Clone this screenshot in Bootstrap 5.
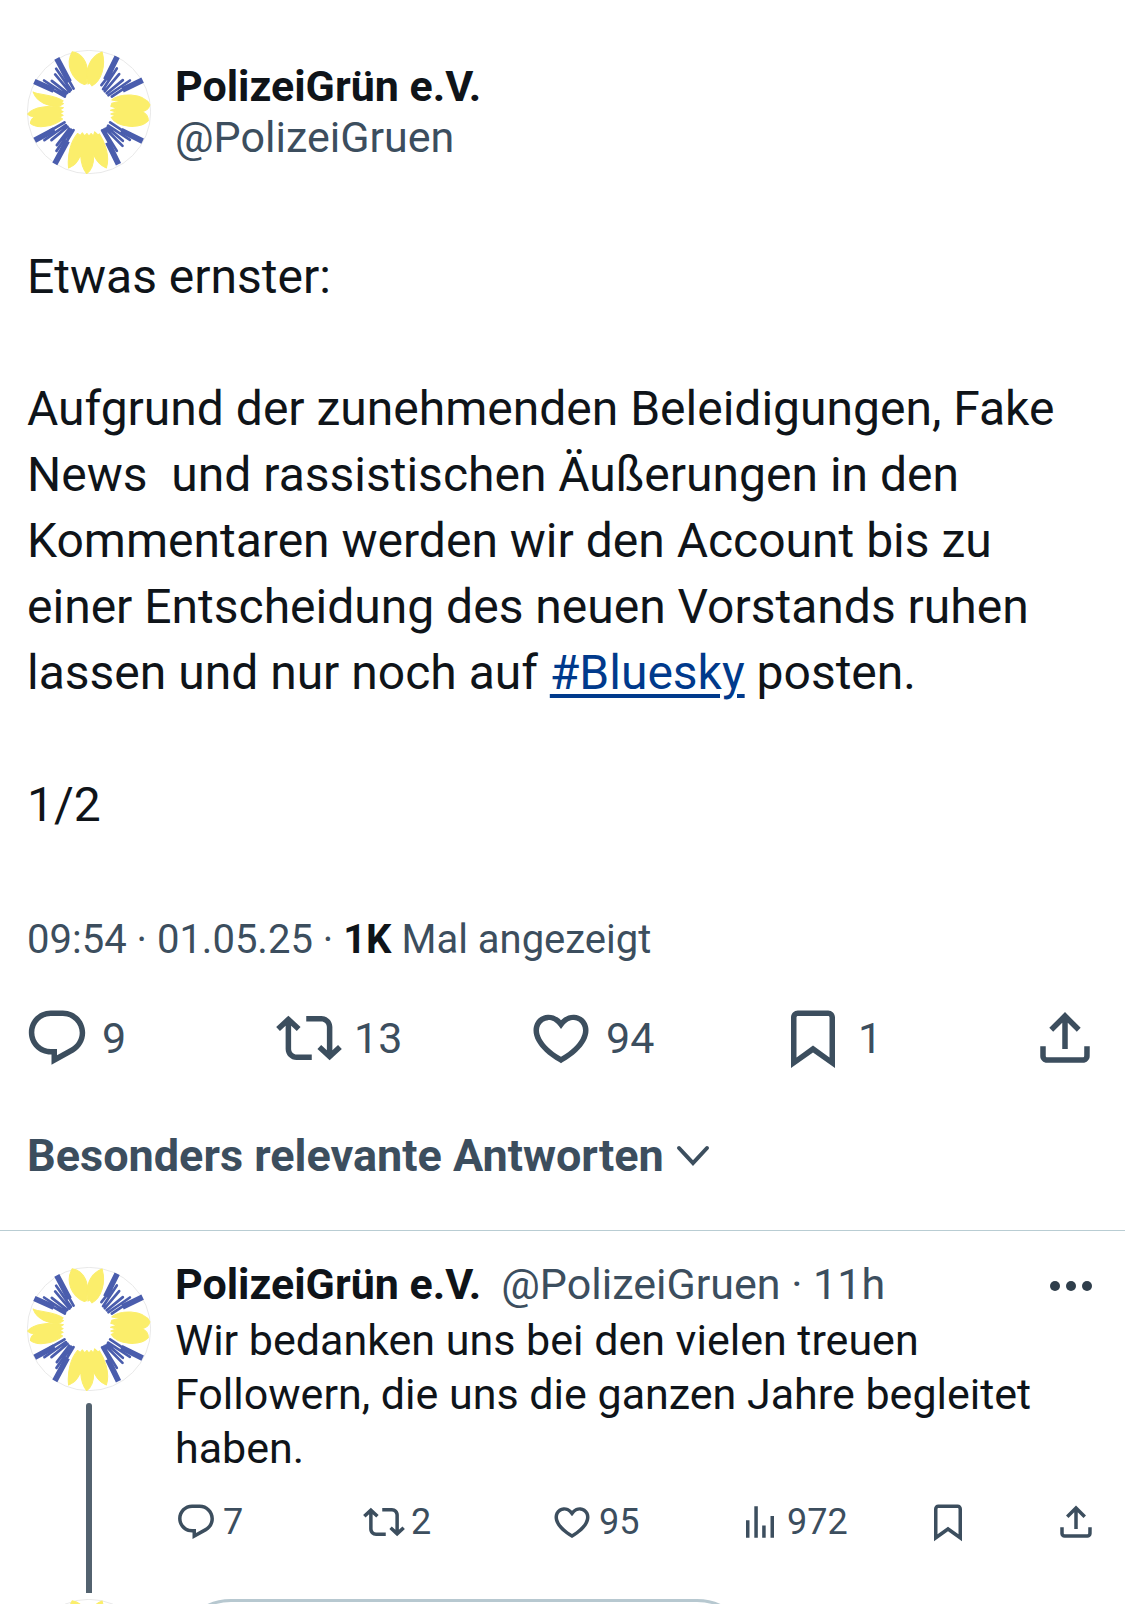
<!DOCTYPE html>
<html lang="de">
<head>
<meta charset="utf-8">
<meta name="viewport" content="width=device-width, initial-scale=1">
<title>PolizeiGrün e.V.</title>
<link rel="stylesheet" href="https://cdn.jsdelivr.net/npm/bootstrap@5.3.0/dist/css/bootstrap.min.css">
<style>
  body { font-family: Roboto, "Noto Sans", sans-serif; color: #0f1419; background: #fff; }
  .slate { color: #3c4e5e; }
  .thread { padding-top: 50px; }
  .head-row { gap: 24px; padding: 0 28px 0 27px; }
  .avatar { width: 124px; height: 124px; display: block; flex: none; }
  .author { font-size: 43px; line-height: 51px; }
  .post-text { font-size: 48px; line-height: 66px; padding: 0 36px 0 27px; margin-top: 70px; }
  .post-text p { margin-bottom: 66px; }
  .post-text p:last-child { margin-bottom: 0; }
  .post-text a { color: #003a8c; text-decoration-thickness: 4px; text-underline-offset: 5px; }
  .post-meta { font-size: 40px; line-height: 48px; padding: 0 27px; margin-top: 78px; }
  .post-meta strong { color: #0f1419; }
  .actions { padding: 0 27px 0 24px; margin-top: 41px; }
  .act { border: 0; background: none; padding: 0; display: flex; align-items: center; color: #3c4e5e; text-align: left; }
  .act svg { fill: currentColor; flex: none; }
  .actions .act { font-size: 43px; line-height: 66px; gap: 12px; }
  .actions .act svg { width: 66px; height: 66px; }
  .grow { flex: 1 1 0; }
  .sorter { border: 0; background: none; font-size: 45px; line-height: 54px; gap: 12px; padding: 0 27px; margin: 58px 0 47px; }
  .sorter svg { width: 34px; height: 24px; }
  .reply { border-top: 1px solid #b9cdd3; gap: 24px; padding: 0 28px 0 27px; }
  .rail { padding-top: 36px; }
  .rail-line { width: 6px; margin-top: 12px; background: #53626f; border-radius: 3px 3px 0 0; }
  .reply-main { padding: 26px 0 50px; font-size: 43px; line-height: 54px; }
  .reply-head { gap: 20px; margin-bottom: 2px; }
  .more { padding-top: 4px; }
  .more svg { width: 42px; height: 12px; margin-right: 5px; fill: #2f3e4b; }
  .reply-actions { margin-top: 26px; }
  .reply-actions .act { font-size: 36px; line-height: 42px; gap: 6px; }
  .reply-actions .act svg { width: 42px; height: 42px; }
  .save { width: 128px; }
  .next { gap: 24px; padding: 6px 27px 0; }
  .quote { width: 578px; height: 124px; border: 3px solid #b7c8d0; border-radius: 56px; }
</style>
<script src="https://cdn.jsdelivr.net/npm/bootstrap@5.3.0/dist/js/bootstrap.bundle.min.js"></script>
</head>
<body>
<svg class="d-none" aria-hidden="true">
  <symbol id="flower" viewBox="37 31 370 370">
    <circle cx="222" cy="216" r="184" fill="#fff" stroke="#dedede" stroke-width="2"/>
    <g fill="#fbee6b" stroke="#fbee6b" stroke-width="3" stroke-linejoin="round">
      <path d="M208 134C168 117 151 72 172 36C200 40 218 68 218 100L214 132Z"/>
      <path d="M219 133C209 88 225 51 261 37C273 77 260 122 231 138L224 129Z"/>
      <path d="M290 190L313 184 290 180C310 160 385 156 404 195C399 210 388 214 380 215C391 219 399 229 399 242C375 267 308 265 288 232L300 227 287 222 303 216 286 211 305 205 287 199Z"/>
      <path d="M55 156C76 166 120 165 145 183L139 187 146 191 133 199C101 200 67 188 55 156Z"/>
      <path d="M39 222C55 199 110 195 146 203L135 210 145 215 136 220 145 226 134 231 143 237C115 261 67 267 47 250C48 240 52 234 61 231C49 230 43 227 39 222Z"/>
      <path d="M188 280L196 286 202 278 209 287 216 280 222 288 228 280 235 287 239 275 249 284 253 281C270 307 285 348 274 383C252 375 242 357 236 344C237 368 229 390 215 400C204 386 198 367 197 344C190 363 178 377 161 383C157 346 166 305 188 280Z"/>
    </g>
    <g stroke="#4a5dad" stroke-linecap="round" fill="none">
      <g stroke-width="17" stroke-linecap="butt">
        <path d="M126 56L163 126M59 125L117 151M306 51L272 120M382 121L322 150M60 300L119 269M120 371L157 302M310 372L278 306M382 303L318 271"/>
      </g>
      <g stroke-width="8">
        <path d="M152 104L176 146M124 87L168 150M121 104L164 155M111 123L157 159M88 122L152 164M100 142L150 170"/>
        <path d="M288 99L259 136M305 86L264 148M312 103L269 154M323 121L275 160M344 122L280 166M335 140L290 170"/>
        <path d="M106 272L149 247M89 300L153 255M110 300L158 260M126 315L163 266M125 332L169 269M150 313L176 270"/>
        <path d="M328 275L285 247M344 299L279 257M323 302L277 262M322 317L271 266M305 332L266 269M286 315L261 271"/>
      </g>
    </g>
  </symbol>
  <symbol id="i-reply" viewBox="0 0 24 24"><path d="M1.751 10c0-4.42 3.584-8 8.005-8h4.366c4.49 0 8.129 3.64 8.129 8.13 0 2.96-1.607 5.68-4.196 7.11l-8.054 4.46v-3.69h-.067c-4.49.1-8.183-3.51-8.183-8.01zm8.005-6c-3.317 0-6.005 2.69-6.005 6 0 3.37 2.77 6.08 6.138 6.01l.351-.01h1.761v2.3l5.087-2.81c1.951-1.08 3.163-3.13 3.163-5.36 0-3.39-2.744-6.13-6.129-6.13H9.756z"/></symbol>
  <symbol id="i-repost" viewBox="0 0 24 24"><path d="M4.5 3.88l4.432 4.14-1.364 1.46L5.5 7.55V16c0 1.1.896 2 2 2H13v2H7.5c-2.209 0-4-1.79-4-4V7.55L1.432 9.48.068 8.02 4.5 3.88zM16.5 6H11V4h5.5c2.209 0 4 1.79 4 4v8.45l2.068-1.93 1.364 1.46-4.432 4.14-4.432-4.14 1.364-1.46 2.068 1.93V8c0-1.1-.896-2-2-2z"/></symbol>
  <symbol id="i-like" viewBox="0 0 24 24"><path d="M16.697 5.5c-1.222-.06-2.679.51-3.89 2.16l-.805 1.09-.806-1.09C9.984 6.01 8.526 5.44 7.304 5.5c-1.243.07-2.349.78-2.91 1.91-.552 1.12-.633 2.78.479 4.82 1.074 1.97 3.257 4.27 7.129 6.61 3.87-2.34 6.052-4.64 7.126-6.61 1.111-2.04 1.03-3.7.477-4.82-.561-1.13-1.666-1.84-2.908-1.91zm4.187 7.69c-1.351 2.48-4.001 5.12-8.379 7.67l-.503.3-.504-.3c-4.379-2.55-7.029-5.19-8.382-7.67-1.36-2.5-1.41-4.86-.514-6.67.887-1.79 2.647-2.91 4.601-3.01 1.651-.09 3.368.56 4.798 2.01 1.429-1.45 3.146-2.1 4.796-2.01 1.954.1 3.714 1.22 4.601 3.01.896 1.81.846 4.17-.514 6.67z"/></symbol>
  <symbol id="i-views" viewBox="0 0 24 24"><path d="M8.75 21V3h2v18h-2zM18 21V8.5h2V21h-2zM4 21l.004-10h2L6 21H4zm9.248 0v-7h2v7h-2z"/></symbol>
  <symbol id="i-save" viewBox="0 0 24 24"><path d="M4 4.5C4 3.12 5.119 2 6.5 2h11C18.881 2 20 3.12 20 4.5v18.44l-8-5.71-8 5.71V4.5zM6.5 4c-.276 0-.5.22-.5.5v14.56l6-4.29 6 4.29V4.5c0-.28-.224-.5-.5-.5h-11z"/></symbol>
  <symbol id="i-share" viewBox="0 0 24 24"><path d="M12 2.59l5.7 5.7-1.41 1.42L13 6.41V16h-2V6.41l-3.3 3.3-1.41-1.42L12 2.59zM21 15l-.02 3.51c0 1.38-1.12 2.49-2.5 2.49H5.5C4.11 21 3 19.88 3 18.5V15h2v3.5c0 .28.22.5.5.5h12.98c.28 0 .5-.22.5-.5L19 15h2z"/></symbol>
</svg>

<main class="thread vh-100 overflow-hidden">
  <article>
    <header class="head-row d-flex align-items-center">
      <svg class="avatar" role="img" aria-label="PolizeiGrün"><use href="#flower"/></svg>
      <div class="author">
        <div class="fw-bold">PolizeiGrün e.V.</div>
        <div class="slate">@PolizeiGruen</div>
      </div>
    </header>
    <div class="post-text">
      <p>Etwas ernster:</p>
      <p>Aufgrund der zunehmenden Beleidigungen, Fake News&nbsp; und rassistischen Äußerungen in den Kommentaren werden wir den Account bis zu einer Entscheidung des neuen Vorstands ruhen lassen und nur noch auf <a href="#bluesky">#Bluesky</a> posten.</p>
      <p>1/2</p>
    </div>
    <div class="post-meta slate">09:54 · 01.05.25 · <strong>1K</strong> Mal angezeigt</div>
    <div class="actions d-flex">
      <button type="button" class="act grow" aria-label="Antworten"><svg><use href="#i-reply"/></svg>9</button>
      <button type="button" class="act grow" aria-label="Reposten"><svg><use href="#i-repost"/></svg>13</button>
      <button type="button" class="act grow" aria-label="Gefällt mir"><svg><use href="#i-like"/></svg>94</button>
      <button type="button" class="act grow" aria-label="Lesezeichen"><svg><use href="#i-save"/></svg>1</button>
      <button type="button" class="act" aria-label="Teilen"><svg><use href="#i-share"/></svg></button>
    </div>
  </article>

  <button type="button" class="sorter slate fw-bold d-flex align-items-center">Besonders relevante Antworten
    <svg viewBox="0 0 34 24" fill="none" stroke="currentColor" stroke-width="4" stroke-linecap="round"><path d="M3 4l14 15L31 4"/></svg>
  </button>

  <article class="reply d-flex">
    <div class="rail d-flex flex-column align-items-center">
      <svg class="avatar" role="img" aria-label="PolizeiGrün"><use href="#flower"/></svg>
      <div class="rail-line flex-grow-1"></div>
    </div>
    <div class="reply-main flex-grow-1">
      <div class="reply-head d-flex align-items-center">
        <span class="fw-bold">PolizeiGrün e.V.</span>
        <span class="slate">@PolizeiGruen · 11h</span>
        <button type="button" class="act more ms-auto" aria-label="Mehr"><svg viewBox="0 0 42 12"><circle cx="5" cy="6" r="5"/><circle cx="21" cy="6" r="5"/><circle cx="37" cy="6" r="5"/></svg></button>
      </div>
      <p class="mb-0">Wir bedanken uns bei den vielen treuen Followern, die uns die ganzen Jahre begleitet haben.</p>
      <div class="reply-actions d-flex">
        <button type="button" class="act grow" aria-label="Antworten"><svg><use href="#i-reply"/></svg>7</button>
        <button type="button" class="act grow" aria-label="Reposten"><svg><use href="#i-repost"/></svg>2</button>
        <button type="button" class="act grow" aria-label="Gefällt mir"><svg><use href="#i-like"/></svg>95</button>
        <button type="button" class="act grow" aria-label="Aufrufe"><svg><use href="#i-views"/></svg>972</button>
        <button type="button" class="act save" aria-label="Lesezeichen"><svg><use href="#i-save"/></svg></button>
        <button type="button" class="act" aria-label="Teilen"><svg><use href="#i-share"/></svg></button>
      </div>
    </div>
  </article>

  <div class="next d-flex">
    <svg class="avatar" role="img" aria-label="PolizeiGrün"><use href="#flower"/></svg>
    <div class="quote"></div>
  </div>
</main>
</body>
</html>
